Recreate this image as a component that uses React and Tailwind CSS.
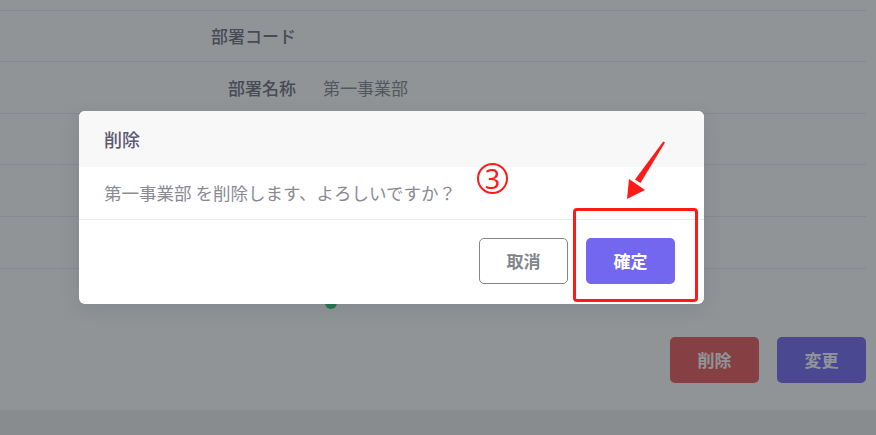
export default function App() {
  const font = { fontFamily: '"Noto Sans CJK JP", "Noto Sans", sans-serif' };
  return (
    <div className="relative w-[876px] h-[435px] bg-[#eeeeee] overflow-hidden" style={font}>
      {/* underlying card */}
      <div className="h-[410px] bg-white pr-[10px] flex flex-col">
        <div className="h-[10px]" />
        <div className="h-[51px] border-t border-[#ebe9f1] flex items-center">
          <div className="w-[296px] text-right text-[17px] font-medium text-[#6e6b7b]">部署コード</div>
        </div>
        <div className="h-[52px] border-t border-[#ebe9f1] flex items-center">
          <div className="w-[296px] text-right text-[17px] font-medium text-[#6e6b7b]">部署名称</div>
          <div className="pl-[27px] text-[17px] text-[#82868b]">第一事業部</div>
        </div>
        <div className="h-[51px] border-t border-[#ebe9f1]" />
        <div className="h-[52px] border-t border-[#ebe9f1]" />
        <div className="h-[52px] border-t border-[#ebe9f1]" />
        <div className="border-t border-[#ebe9f1] pt-[28px] pl-[325px]">
          <div className="w-[12px] h-[12px] rounded-full bg-[#28c76f]" />
        </div>
        <div className="mt-[28px] flex justify-end gap-[18px]">
          <button className="w-[89px] h-[46px] rounded-[5px] bg-[#ea5455] text-white text-[17px] font-semibold">削除</button>
          <button className="w-[89px] h-[46px] rounded-[5px] bg-[#7367f0] text-white text-[17px] font-semibold">変更</button>
        </div>
      </div>

      {/* overlay */}
      <div className="absolute inset-0 bg-[rgba(34,41,47,0.5)]" />

      {/* modal */}
      <div className="absolute left-[79px] top-[111px] w-[625px] bg-white rounded-[6px] overflow-hidden shadow-[0_5px_20px_rgba(34,41,47,0.1)]">
        <div className="h-[56px] bg-[#f8f8f8] px-[25px] flex items-center">
          <span className="text-[18px] font-medium text-[#5e5873]">削除</span>
        </div>
        <div className="h-[53px] px-[25px] flex items-center border-b border-[#ebe9f1]">
          <span className="text-[17.5px] text-[#8a8a94]">第一事業部 を削除します、よろしいですか？</span>
        </div>
        <div className="flex justify-end gap-[18px] pt-[18px] pr-[29px] pb-[20px]">
          <button className="w-[89px] h-[46px] rounded-[5px] border border-[#82868b] bg-white text-[#82868b] text-[17px] font-semibold">取消</button>
          <button className="w-[89px] h-[46px] rounded-[5px] bg-[#7367f0] text-white text-[17px] font-semibold">確定</button>
        </div>
      </div>

      {/* annotations */}
      <div className="absolute left-[477px] top-[163px] w-[31px] h-[31px] rounded-full border-2 border-[#ff1a1a] flex items-center justify-center">
        <span className="text-[27px] leading-none text-[#ff1a1a]" style={{ fontFamily: '"Noto Sans", sans-serif' }}>3</span>
      </div>
      <div className="absolute left-[573px] top-[208px] w-[125px] h-[94px] border-[3px] border-[#ff1a1a] rounded-[4px]" />
      <svg className="absolute left-0 top-0" width="876" height="435" viewBox="0 0 876 435">
        <polygon points="663.2,141.4 665,142.6 640.5,183 635,179.5" fill="#ff1a1a" />
        <polygon points="627,199 629,179 645,190" fill="#ff1a1a" />
      </svg>
    </div>
  );
}
